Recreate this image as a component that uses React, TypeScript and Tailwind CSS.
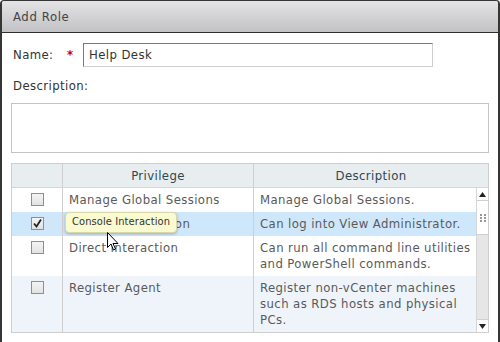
import React from "react";

interface Row {
  name: string;
  desc: string[];
  checked?: boolean;
  selected?: boolean;
  alt?: boolean;
}

const rows: Row[] = [
  { name: "Manage Global Sessions", desc: ["Manage Global Sessions."] },
  {
    name: "Console Interaction",
    desc: ["Can log into View Administrator."],
    checked: true,
    selected: true,
  },
  {
    name: "Direct Interaction",
    desc: ["Can run all command line utilities", "and PowerShell commands."],
  },
  {
    name: "Register Agent",
    desc: [
      "Register non-vCenter machines",
      "such as RDS hosts and physical",
      "PCs.",
    ],
    alt: true,
  },
];

function Checkbox({ checked }: { checked?: boolean }) {
  return (
    <div className="w-[13px] h-[13px] border border-[#8f8f8f] bg-gradient-to-b from-[#f4f4f4] to-[#e2e2e2] flex items-center justify-center">
      {checked && (
        <svg width="11" height="11" viewBox="0 0 11 11">
          <path d="M2 5.5 L4.5 8.5 L9 1.5" fill="none" stroke="#222" strokeWidth="1.8" />
        </svg>
      )}
    </div>
  );
}

function Scrollbar() {
  return (
    <div className="w-[12px] flex flex-col border-l border-[#d6d6d6] bg-[#e6e6e6]">
      <div className="h-[13px] bg-white flex items-center justify-center border-b border-[#d0d0d0]">
        <svg width="7" height="5" viewBox="0 0 7 5">
          <path d="M3.5 0 L7 5 L0 5 Z" fill="#222" />
        </svg>
      </div>
      <div className="h-[34px] bg-white border-b border-[#d0d0d0] flex items-center justify-center">
        <svg width="6" height="8" viewBox="0 0 6 8">
          {[0, 3, 6].map((y) => (
            <React.Fragment key={y}>
              <rect x="0" y={y} width="2" height="2" fill="#999" />
              <rect x="4" y={y} width="2" height="2" fill="#999" />
            </React.Fragment>
          ))}
        </svg>
      </div>
      <div className="flex-1" />
      <div className="h-[13px] bg-white flex items-center justify-center border-t border-[#d0d0d0]">
        <svg width="7" height="5" viewBox="0 0 7 5">
          <path d="M0 0 L7 0 L3.5 5 Z" fill="#222" />
        </svg>
      </div>
    </div>
  );
}

export default function App() {
  return (
    <div
      className="w-[500px] h-[342px] bg-white flex flex-col border-x-2 border-t border-[#353535] rounded-t-[4px] overflow-hidden text-[13px] tracking-[0.4px] text-[#333]"
      style={{ fontFamily: '"DejaVu Sans Condensed", "DejaVu Sans", sans-serif' }}
    >
      {/* Title bar */}
      <div className="h-[32px] shrink-0 flex items-center pl-[11px] border-b border-[#2e2e2e] bg-gradient-to-b from-[#e4e4e7] to-[#c2c2c5] text-[#444] tracking-[0.6px]">
        Add Role
      </div>

      <div className="relative flex-1 flex flex-col px-[9px]">
        {/* Name */}
        <div className="flex items-center mt-[10px] h-[24px]">
          <span className="w-[56px] pl-[2px]">Name:</span>
          <span className="w-[16px] text-[#d00000] font-bold">*</span>
          <div className="w-[350px] h-[24px] flex items-center pl-[5px] border border-[#cfcfcf] border-t-[#7a7a7a] border-l-[#7a7a7a]">
            Help Desk
          </div>
        </div>

        {/* Description */}
        <div className="mt-[11px] pl-[2px] h-[16px] leading-[16px]">Description:</div>
        <div className="mt-[9px] h-[50px] border border-[#c4c4c4]" />

        {/* Table */}
        <div className="mt-[10px] h-[170px] flex flex-col border border-[#cfcfcf]">
          <div className="h-[24px] shrink-0 flex bg-[#e8edf0] text-[#2e4753] border-b border-[#d4d8dc]">
            <div className="w-[51px] border-r border-[#cfcfcf]" />
            <div className="w-[191px] flex items-center justify-center border-r border-[#cfcfcf]">
              Privilege
            </div>
            <div className="flex-1 flex items-center justify-center">Description</div>
          </div>
          <div className="flex-1 flex min-h-0">
            <div className="flex-1 flex flex-col text-[#5a5a5a] leading-[16px]">
              {rows.map((r) => (
                <div
                  key={r.name}
                  className={`flex ${r.selected ? "bg-[#cfe7fa]" : r.alt ? "bg-[#eff4fa]" : "bg-white"} ${r.alt ? "flex-1" : ""}`}
                >
                  <div className="w-[51px] flex justify-center pt-[5px] pb-[6px] border-r border-[#cfcfcf]">
                    <Checkbox checked={r.checked} />
                  </div>
                  <div className="w-[191px] pl-[6px] py-[4px] border-r border-[#cfcfcf] whitespace-nowrap">
                    {r.name}
                  </div>
                  <div className="flex-1 pl-[6px] py-[4px] whitespace-nowrap">
                    {r.desc.map((d) => (
                      <div key={d}>{d}</div>
                    ))}
                  </div>
                </div>
              ))}
            </div>
            <Scrollbar />
          </div>
        </div>

        {/* Tooltip */}
        <div className="absolute left-[63px] top-[179px] h-[21px] px-[6px] flex items-center rounded-[4px] border border-[#d8d8a8] bg-[#fbfbd2] text-[11px] tracking-[0.1px] text-[#333] shadow-[0_1px_3px_rgba(0,0,0,0.25)] whitespace-nowrap">
          Console Interaction
        </div>

        {/* Cursor */}
        <svg
          className="absolute left-[105px] top-[199px]"
          width="12"
          height="20"
          viewBox="0 0 12 20"
        >
          <path
            d="M0.5 0.5 L0.5 15.5 L4 12 L6.5 18 L8.5 17 L6 11.5 L11 11.5 Z"
            fill="white"
            stroke="black"
            strokeWidth="1"
          />
        </svg>
      </div>
    </div>
  );
}
